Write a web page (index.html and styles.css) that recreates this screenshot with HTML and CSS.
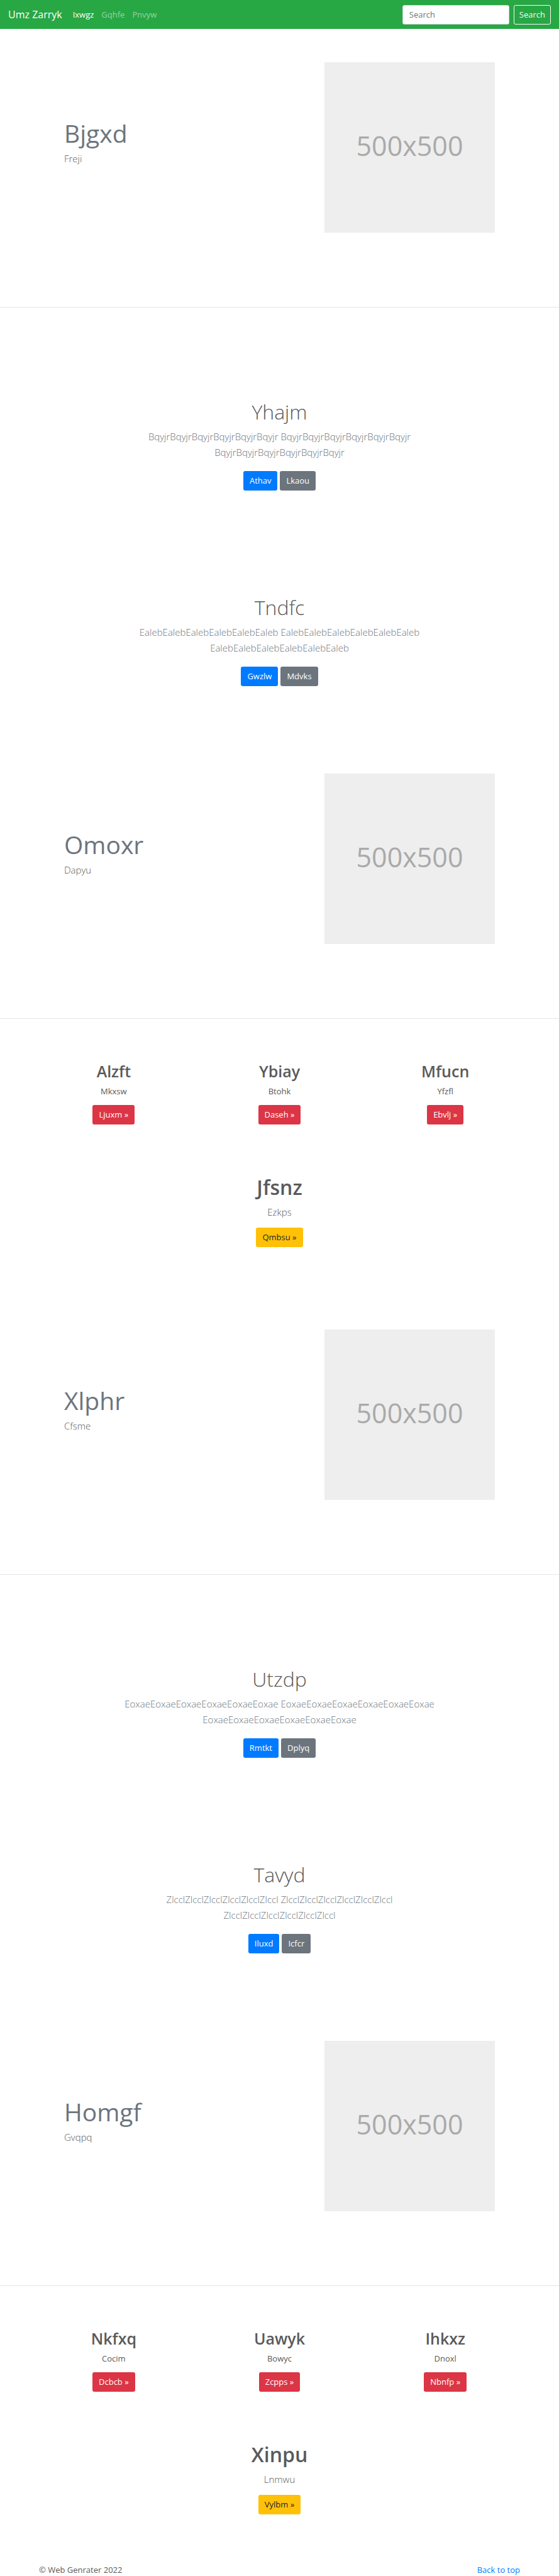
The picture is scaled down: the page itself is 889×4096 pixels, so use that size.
FILE: index.html
```html
<!DOCTYPE html>
<html lang="en">
<head>
<meta charset="utf-8">
<meta name="viewport" content="width=device-width, initial-scale=1">
<title>Umz Zarryk</title>
<link rel="stylesheet" href="styles.css">
</head>
<body id="top">
<header class="navbar">
  <a class="brand" href="#">Umz Zarryk</a>
  <nav class="nav">
    <a class="nav-link active" href="#">Ixwgz</a>
    <a class="nav-link" href="#">Gqhfe</a>
    <a class="nav-link" href="#">Pnvyw</a>
  </nav>
  <form class="search">
    <input class="search-input" type="search" placeholder="Search" aria-label="Search">
    <button class="btn btn-outline" type="submit">Search</button>
  </form>
</header>

<main>
  <section class="hero">
    <div>
      <h2 class="hero-title">Bjgxd</h2>
      <p class="lead">Freji</p>
    </div>
    <div class="placeholder">500x500</div>
  </section>

  <div class="cta-group">
    <section class="cta">
      <h1 class="cta-title">Yhajm</h1>
      <p class="lead muted">BqyjrBqyjrBqyjrBqyjrBqyjrBqyjr BqyjrBqyjrBqyjrBqyjrBqyjrBqyjr BqyjrBqyjrBqyjrBqyjrBqyjrBqyjr</p>
      <div class="actions"><a class="btn btn-primary" href="#">Athav</a><a class="btn btn-secondary" href="#">Lkaou</a></div>
    </section>
    <section class="cta">
      <h1 class="cta-title">Tndfc</h1>
      <p class="lead muted">EalebEalebEalebEalebEalebEaleb EalebEalebEalebEalebEalebEaleb EalebEalebEalebEalebEalebEaleb</p>
      <div class="actions"><a class="btn btn-primary" href="#">Gwzlw</a><a class="btn btn-secondary" href="#">Mdvks</a></div>
    </section>
  </div>

  <section class="hero">
    <div>
      <h2 class="hero-title">Omoxr</h2>
      <p class="lead">Dapyu</p>
    </div>
    <div class="placeholder">500x500</div>
  </section>

  <section class="features">
    <div class="feature">
      <h2 class="feature-title">Alzft</h2>
      <p class="text">Mkxsw</p>
      <a class="btn btn-danger" href="#">Ljuxm »</a>
    </div>
    <div class="feature">
      <h2 class="feature-title">Ybiay</h2>
      <p class="text">Btohk</p>
      <a class="btn btn-danger" href="#">Daseh »</a>
    </div>
    <div class="feature">
      <h2 class="feature-title">Mfucn</h2>
      <p class="text">Yfzfl</p>
      <a class="btn btn-danger" href="#">Ebvlj »</a>
    </div>
  </section>
  <section class="feature spotlight">
    <h1 class="spotlight-title">Jfsnz</h1>
    <p class="lead">Ezkps</p>
    <a class="btn btn-warning" href="#">Qmbsu »</a>
  </section>

  <section class="hero">
    <div>
      <h2 class="hero-title">Xlphr</h2>
      <p class="lead">Cfsme</p>
    </div>
    <div class="placeholder">500x500</div>
  </section>

  <div class="cta-group">
    <section class="cta">
      <h1 class="cta-title">Utzdp</h1>
      <p class="lead muted">EoxaeEoxaeEoxaeEoxaeEoxaeEoxae EoxaeEoxaeEoxaeEoxaeEoxaeEoxae EoxaeEoxaeEoxaeEoxaeEoxaeEoxae</p>
      <div class="actions"><a class="btn btn-primary" href="#">Rmtkt</a><a class="btn btn-secondary" href="#">Dplyq</a></div>
    </section>
    <section class="cta">
      <h1 class="cta-title">Tavyd</h1>
      <p class="lead muted">ZlcclZlcclZlcclZlcclZlcclZlccl ZlcclZlcclZlcclZlcclZlcclZlccl ZlcclZlcclZlcclZlcclZlcclZlccl</p>
      <div class="actions"><a class="btn btn-primary" href="#">Iluxd</a><a class="btn btn-secondary" href="#">Icfcr</a></div>
    </section>
  </div>

  <section class="hero">
    <div>
      <h2 class="hero-title">Homgf</h2>
      <p class="lead">Gvqpq</p>
    </div>
    <div class="placeholder">500x500</div>
  </section>

  <section class="features">
    <div class="feature">
      <h2 class="feature-title">Nkfxq</h2>
      <p class="text">Cocim</p>
      <a class="btn btn-danger" href="#">Dcbcb »</a>
    </div>
    <div class="feature">
      <h2 class="feature-title">Uawyk</h2>
      <p class="text">Bowyc</p>
      <a class="btn btn-danger" href="#">Zcpps »</a>
    </div>
    <div class="feature">
      <h2 class="feature-title">Ihkxz</h2>
      <p class="text">Dnoxl</p>
      <a class="btn btn-danger" href="#">Nbnfp »</a>
    </div>
  </section>
  <section class="feature spotlight">
    <h1 class="spotlight-title">Xinpu</h1>
    <p class="lead">Lnmwu</p>
    <a class="btn btn-warning" href="#">Vylbm »</a>
  </section>
</main>

<footer class="footer">
  <p class="text">© Web Genrater 2022</p>
  <a class="footer-link" href="#top">Back to top</a>
</footer>
</body>
</html>
```

FILE: styles.css
```css
*,
*::before,
*::after {
  box-sizing: border-box;
}

body {
  margin: 0;
  background: #fff;
  color: #5a5a5a;
  font-family: "Open Sans", "Noto Sans", sans-serif;
  font-size: 13px;
  line-height: 20px;
}

h1,
h2,
p {
  margin: 0;
}

a {
  text-decoration: none;
}

/* Navigation bar */
.navbar {
  display: flex;
  align-items: center;
  height: 46px;
  padding: 0 13px;
  background: #28a745;
}

.brand {
  margin-right: 17px;
  color: #fff;
  font-size: 16px;
  line-height: 24px;
}

.nav {
  display: flex;
  gap: 12px;
}

.nav-link {
  color: rgba(255, 255, 255, 0.5);
}

.nav-link.active {
  color: #fff;
}

.search {
  display: flex;
  gap: 7px;
  margin-left: auto;
}

.search-input {
  width: 170px;
  height: 31px;
  padding: 0 10px;
  border: 1px solid #ced4da;
  border-radius: 3px;
  background: #fff;
  color: #495057;
  font: inherit;
}

.search-input::placeholder {
  color: #6c757d;
  opacity: 1;
}

/* Buttons */
.btn {
  display: inline-block;
  height: 31px;
  padding: 5px 10px;
  border: 0;
  border-radius: 3px;
  color: #fff;
  font: inherit;
}

.btn-outline {
  padding: 4px 8px;
  border: 1px solid #f8f9fa;
  background: transparent;
  color: #f8f9fa;
}

.btn-primary {
  background: #007bff;
}

.btn-secondary {
  background: #6c757d;
}

.btn-danger {
  background: #dc3545;
}

.btn-warning {
  background: #ffc107;
  color: #212529;
}

/* Hero rows */
.hero {
  display: grid;
  grid-template-columns: 1fr 271px;
  align-items: center;
  padding: 53px 102px 118px;
  border-bottom: 1px solid #e5e5e5;
}

.hero-title {
  padding-bottom: 4px;
  color: #6c757d;
  font-size: 39px;
  font-weight: 400;
  line-height: 48px;
}

.hero .lead {
  padding-bottom: 16px;
}

.lead {
  font-size: 15px;
  font-weight: 300;
  line-height: 25px;
}

.muted {
  color: #6c757d;
}

.placeholder {
  display: grid;
  place-items: center;
  aspect-ratio: 1;
  padding-bottom: 6px;
  background: #eee;
  color: #aaa;
  font-size: 43px;
  line-height: 48px;
}

/* Calls to action */
.cta-group {
  padding-top: 66px;
}

.cta {
  max-width: 530px;
  margin: 0 auto;
  padding: 81px 0 86px;
  text-align: center;
}

.cta-title {
  margin-bottom: 8px;
  font-size: 32px;
  font-weight: 300;
  line-height: 38px;
}

.actions {
  display: flex;
  justify-content: center;
  gap: 4px;
  margin-top: 17px;
}

/* Feature columns */
.features {
  display: grid;
  grid-template-columns: repeat(3, 1fr);
  padding: 68px 49px 0;
}

.feature {
  display: flex;
  flex-direction: column;
  align-items: center;
}

.feature-title {
  margin-bottom: 6px;
  font-size: 25px;
  font-weight: 600;
  line-height: 31px;
}

.feature .btn {
  margin-top: 12px;
}

.spotlight {
  padding: 81px 0 78px;
}

.spotlight-title {
  margin-bottom: 8px;
  font-size: 32px;
  font-weight: 600;
  line-height: 38px;
}

/* Footer */
.footer {
  display: flex;
  justify-content: space-between;
  padding: 0 62px;
}

.footer-link {
  color: #007bff;
}
```
